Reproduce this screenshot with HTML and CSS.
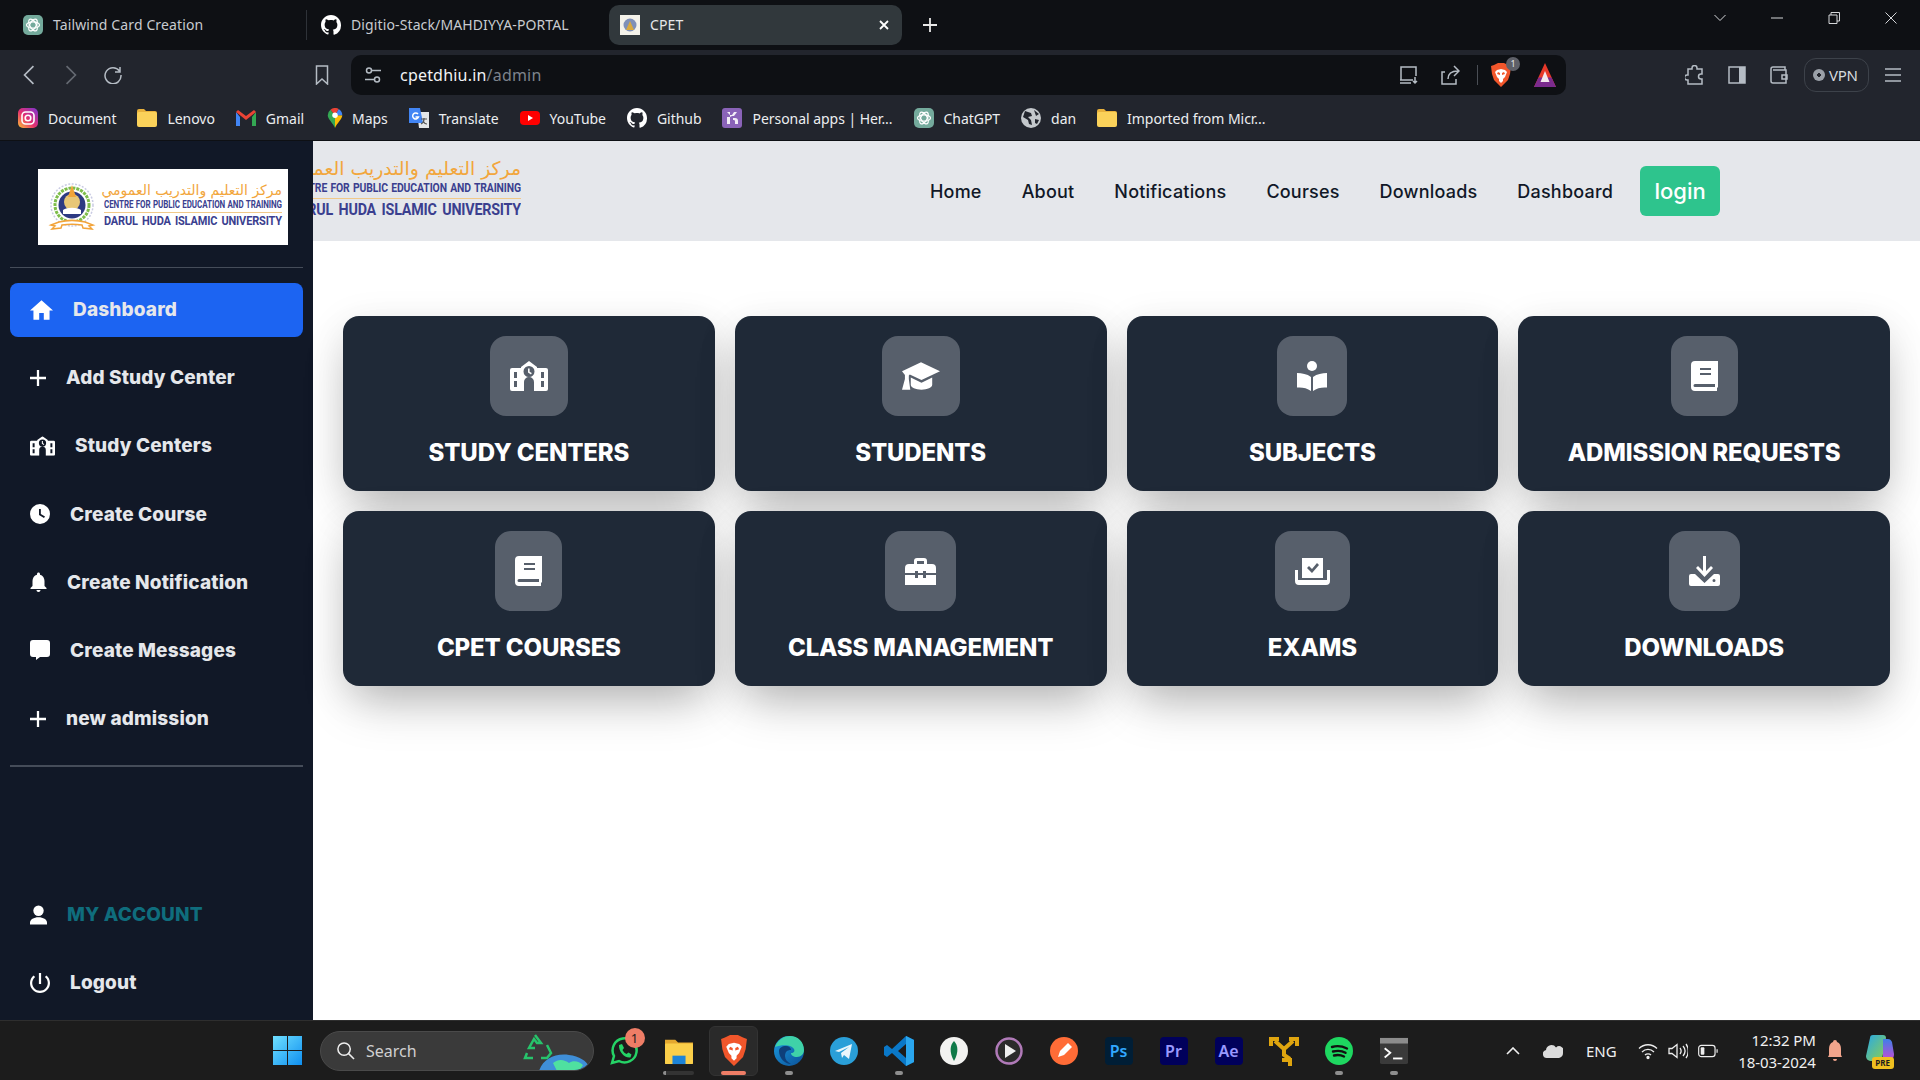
FILE: index.html
```html
<!DOCTYPE html>
<html lang="en">
<head>
<meta charset="utf-8">
<title>CPET</title>
<link rel="stylesheet" href="styles.css">
</head>
<body>
<svg class="defs" aria-hidden="true">
  <defs>
    <linearGradient id="ig" x1="0" y1="1" x2="1" y2="0"><stop offset="0" stop-color="#fdc136"/><stop offset=".45" stop-color="#e6306e"/><stop offset="1" stop-color="#7a35d4"/></linearGradient>
    <linearGradient id="win" x1="0" y1="0" x2="1" y2="1"><stop offset="0" stop-color="#6fe0ff"/><stop offset="1" stop-color="#0f8ff0"/></linearGradient>
    <linearGradient id="edge" x1="0" y1="0" x2="1" y2="1"><stop offset="0" stop-color="#1b9de2"/><stop offset="1" stop-color="#0b4f96"/></linearGradient>
    <linearGradient id="cop" x1="0" y1="0" x2="1" y2="1"><stop offset="0" stop-color="#27a9e8"/><stop offset="1" stop-color="#8fd04a"/></linearGradient>
    <linearGradient id="cop2" x1="0" y1="0" x2="0" y2="1"><stop offset="0" stop-color="#3f7fe8"/><stop offset="1" stop-color="#c84ad0"/></linearGradient>
    <symbol id="i-school" viewBox="0 0 38 30"><path fill-rule="evenodd" d="M19 0l8 6v1h9a2 2 0 0 1 2 2v19a2 2 0 0 1-2 2H24V21a5 5 0 0 0-10 0v9H2a2 2 0 0 1-2-2V9a2 2 0 0 1 2-2h9V6zM19 5a5.500 5.500 0 1 0 0 11 5.500 5.500 0 0 0 0-11zM18 7.500h1.600v3.300l2.200 1.300-.8 1.300-3-1.800zM4 11v6h3v-6zM4 20v6h3v-6zM31 11v6h3v-6zM31 20v6h3v-6z"/></symbol>
    <symbol id="i-cap" viewBox="0 0 39 28"><path d="M19.500 0L39 9 20 18 8 12.500 7 13.500V17l1.500 11H0l3-11v-4L0 9zM9 15.500L20 21l11-5.500V23c0 3-5 5-11 5s-11-2-11-5z"/></symbol>
    <symbol id="i-reader" viewBox="0 0 30 30"><circle cx="15" cy="5" r="5"/><path d="M0 12c5 0 10 1 14 4v14c-4-3-9-4-14-3.500zM30 12c-5 0-10 1-14 4v14c4-3 9-4 14-3.500z"/></symbol>
    <symbol id="i-book" viewBox="0 0 27 30"><path fill-rule="evenodd" d="M4 0h23v26l-1 1v3H4a4 4 0 0 1-4-4V4a4 4 0 0 1 4-4zM9 7v2h11V7zM9 12v2h11v-2zM4 23a1.500 1.500 0 0 0 0 3h20v-3z"/></symbol>
    <symbol id="i-case" viewBox="0 0 31 27"><path fill-rule="evenodd" d="M9 6V3a3 3 0 0 1 3-3h7a3 3 0 0 1 3 3v3h5a4 4 0 0 1 4 4v5H21v-2h-3v2h-5v-2h-3v2H0v-5a4 4 0 0 1 4-4zM12 3v3h7V3zM0 17h10v3h3v-3h5v3h3v-3h10v10H0z"/></symbol>
    <symbol id="i-exam" viewBox="0 0 35 27"><path fill-rule="evenodd" d="M7 0h21v20H7zM12 10l2-2 3 3 5-6 2 2-7 8zM0 12h3v10h29V12h3v11a4 4 0 0 1-4 4H4a4 4 0 0 1-4-4z"/></symbol>
    <symbol id="i-dl" viewBox="0 0 31 30"><path fill-rule="evenodd" d="M14 0h3v15l5-5 2 2-8.500 9L7 12l2-2 5 5zM2 18h4l9.500 9 9.500-9h4a2 2 0 0 1 2 2v8a2 2 0 0 1-2 2H2a2 2 0 0 1-2-2v-8a2 2 0 0 1 2-2zM25 23a1.500 1.500 0 1 0 0 3 1.500 1.500 0 0 0 0-3z"/></symbol>
    <symbol id="i-plus" viewBox="5 5 14 14"><path d="M19 13h-6v6h-2v-6H5v-2h6V5h2v6h6v2z"/></symbol>
    <symbol id="i-github" viewBox="0 0 16 16"><path d="M8 0C3.580 0 0 3.580 0 8c0 3.540 2.290 6.530 5.470 7.590.4.070.55-.17.55-.38v-1.340c-2.230.48-2.700-1.070-2.700-1.070-.36-.92-.89-1.170-.89-1.170-.73-.5.060-.49.060-.49.800.060 1.220.82 1.220.82.710 1.220 1.870.87 2.330.66.070-.52.280-.87.510-1.070-1.780-.2-3.640-.89-3.640-3.950 0-.87.310-1.590.82-2.150-.08-.2-.36-1.020.08-2.120 0 0 .67-.21 2.200.82A7.600 7.600 0 0 1 8 4.040c.68 0 1.360.09 2 .27 1.530-1.040 2.200-.82 2.200-.82.440 1.100.16 1.920.08 2.120.510.56.820 1.270.82 2.150 0 3.070-1.870 3.750-3.650 3.950.290.25.540.73.540 1.480v2.200c0 .21.150.46.550.38A8 8 0 0 0 16 8c0-4.420-3.580-8-8-8z"/></symbol>
    <symbol id="i-gpt" viewBox="0 0 20 20"><rect width="20" height="20" rx="5" fill="#74aa9c"/><g fill="none" stroke="#fff" stroke-width="1.300"><ellipse cx="10" cy="10" rx="6.500" ry="3.200"/><ellipse cx="10" cy="10" rx="6.500" ry="3.200" transform="rotate(60 10 10)"/><ellipse cx="10" cy="10" rx="6.500" ry="3.200" transform="rotate(120 10 10)"/></g></symbol>
    <symbol id="i-folder" viewBox="0 0 20 18"><path fill="#e9b23c" d="M0 2a2 2 0 0 1 2-2h5l2 2h9a2 2 0 0 1 2 2v2H0z"/><rect y="3" width="20" height="15" rx="2" fill="#fbd25a"/></symbol>
    <symbol id="i-brave" viewBox="0 0 20 24"><path fill="#f1562b" d="M3 2l4-2h6l4 2 3 1-1 8-2 6-7 7-7-7-2-6-1-8z"/><path fill="#fff" d="M6 7l4-1 4 1 2 2-2 5-2 2v2l-2 2-2-2v-2l-2-2-2-5z"/><path fill="#f1562b" d="M7 9l2 1v2l-3-1zM13 9l-2 1v2l3-1z"/></symbol>
  </defs>
</svg>

<div class="chrome">
  <div class="tabstrip">
    <div class="tab tab-first"><svg class="fav"><use href="#i-gpt"/></svg><span>Tailwind Card Creation</span></div>
    <div class="tab tab-second"><svg class="fav fav-white"><use href="#i-github"/></svg><span>Digitio-Stack/MAHDIYYA-PORTAL</span></div>
    <div class="tab tab-active">
      <svg class="fav" viewBox="0 0 20 20"><rect width="20" height="20" fill="#f4f2ea"/><circle cx="10" cy="10" r="6.500" fill="#7f90b8"/><path d="M6 15l4-9 4 9z" fill="#d8a93f"/></svg>
      <span>CPET</span>
      <svg class="tab-close" viewBox="0 0 10 10"><path d="M1 1l8 8M9 1l-8 8"/></svg>
    </div>
    <svg class="tab-new" viewBox="0 0 14 14"><path d="M7 0v14M0 7h14"/></svg>
    <div class="winctl">
      <div class="wc"><svg viewBox="0 0 12 7"><path d="M.5.500L6 6 11.500.500"/></svg></div>
      <div class="wc"><svg viewBox="0 0 12 12"><path d="M0 6h12"/></svg></div>
      <div class="wc"><svg viewBox="0 0 12 12"><path d="M1 3h8v8.500H1zM3 3V.500h8.500V9H9"/></svg></div>
      <div class="wc"><svg viewBox="0 0 12 12"><path d="M.5.500l11 11M11.500.500l-11 11"/></svg></div>
    </div>
  </div>

  <div class="toolbar">
    <div class="tb-left">
      <div class="tb-cell"><svg class="ln" viewBox="0 0 10 18"><path d="M9 1L1 9l8 8"/></svg></div>
      <div class="tb-cell tb-dim"><svg class="ln" viewBox="0 0 10 18"><path d="M1 1l8 8-8 8"/></svg></div>
      <div class="tb-cell"><svg class="ln ln-18" viewBox="0 0 18 18"><path d="M15.500 5A8 8 0 1 0 17 9M16 1v5h-5"/></svg></div>
    </div>
    <div class="tb-cell tb-bookmark"><svg class="ln" viewBox="0 0 14 20"><path d="M1.500 1h11v18L7 14l-5.500 5z"/></svg></div>
    <div class="urlbar">
      <svg class="ln ln-tune" viewBox="0 0 18 18"><circle cx="5" cy="4.500" r="2.500"/><path d="M8 4.500h9M1 13.500h9"/><circle cx="13" cy="13.500" r="2.500"/></svg>
      <div class="url"><span class="url-host">cpetdhiu.in</span><span class="url-path">/admin</span></div>
      <div class="url-actions">
        <svg class="ln act-install" viewBox="0 0 20 20"><path d="M13 15H2V2h15v9M1 15h13M1 18h11M16 12v6M14 16l2 2 2-2"/></svg>
        <svg class="ln act-share" viewBox="0 0 20 20"><path d="M5 7H2v12h14v-5M8 14c0-5 3-8 10-8M14 1l5 5-5 5"/></svg>
        <span class="act-sep"></span>
        <span class="brave-wrap"><svg class="brave-ico"><use href="#i-brave"/></svg><span class="brave-badge">1</span></span>
        <svg class="act-tri" viewBox="0 0 22 24"><path fill="#e8392a" d="M11 0l11 24H0z"/><path fill="#7b2b8e" d="M4.500 14.500h13L22 24H0z"/><path fill="#f4e9ee" d="M11 8l4.500 11h-9z"/></svg>
      </div>
    </div>
    <div class="tb-right">
      <div class="tb-cell"><svg class="ln" viewBox="0 0 20 20"><path d="M7 3a2.500 2.500 0 0 1 5 0v1h5v5h-1a2.500 2.500 0 0 0 0 5h1v5H3v-4h-1a2.500 2.500 0 0 1 0-5h1V4h4z"/></svg></div>
      <div class="tb-cell"><svg class="sidepanel" viewBox="0 0 18 18"><path fill="none" stroke="#b5bcc4" stroke-width="1.500" d="M1 1h16v16H1z"/><path fill="#b5bcc4" d="M11 1h6v16h-6z"/></svg></div>
      <div class="tb-cell"><svg class="ln" viewBox="0 0 20 20"><path d="M16 5V2H4a2 2 0 0 0-2 2v12a2 2 0 0 0 2 2h13V5H4M13 10h5v4h-5z"/></svg></div>
      <div class="vpn"><span class="vpn-dot"></span><span>VPN</span></div>
      <div class="tb-cell tb-menu"><svg class="ln" viewBox="0 0 16 14"><path d="M0 1h16M0 7h16M0 13h16"/></svg></div>
    </div>
  </div>

  <div class="bookmarks">
    <div class="bm"><svg viewBox="0 0 20 20"><rect width="20" height="20" rx="5" fill="url(#ig)"/><rect x="4" y="4" width="12" height="12" rx="3.500" fill="none" stroke="#fff" stroke-width="1.600"/><circle cx="10" cy="10" r="2.800" fill="none" stroke="#fff" stroke-width="1.600"/></svg><span>Document</span></div>
    <div class="bm"><svg><use href="#i-folder"/></svg><span>Lenovo</span></div>
    <div class="bm"><svg viewBox="0 0 20 16"><path fill="#4285f4" d="M0 2v14h4V7z"/><path fill="#34a853" d="M16 7v9h4V2z"/><path fill="#ea4335" d="M0 2l10 8 10-8-2-2-8 6-8-6z"/></svg><span>Gmail</span></div>
    <div class="bm bm-maps"><svg viewBox="0 0 16 22"><path fill="#34a853" d="M8 22C6 17 0 12 0 8a8 8 0 0 1 3-6l5 6z"/><path fill="#fbbc04" d="M8 22c2-5 8-10 8-14l-8 0z"/><path fill="#4285f4" d="M16 8a8 8 0 0 0-4-7L8 8z"/><path fill="#ea4335" d="M3 2a8 8 0 0 1 9-1L8 8z"/><circle cx="8" cy="8" r="3" fill="#fff"/></svg><span>Maps</span></div>
    <div class="bm"><svg viewBox="0 0 20 20"><path fill="#e4e6e8" d="M8 4h12v16H10z"/><path fill="#4285f4" d="M0 0h11l3 15H0z"/><path fill="none" stroke="#fff" stroke-width="1.500" d="M9 6a3 3 0 1 0 .5 3H6.500"/><path fill="none" stroke="#555" stroke-width="1.200" d="M12 11h6M15 10v1c0 2-1 4-3 5M14 13c1 2 2 3 4 3"/></svg><span>Translate</span></div>
    <div class="bm"><svg viewBox="0 0 20 20"><rect y="3" width="20" height="14" rx="4" fill="#f00"/><path fill="#fff" d="M8 7l5 3-5 3z"/></svg><span>YouTube</span></div>
    <div class="bm"><svg class="fav-white"><use href="#i-github"/></svg><span>Github</span></div>
    <div class="bm"><svg viewBox="0 0 20 20"><rect width="20" height="20" rx="3" fill="#8a63b8"/><path fill="#f2edf7" d="M5 4h3v5l2-1h2l3-4h-3l-2 3H8zM5 9h3v7H5zM11 10h2c2 0 3 1 3 3v3h-3v-3c0-1-1-1-2-1z"/></svg><span>Personal apps | Her...</span></div>
    <div class="bm"><svg><use href="#i-gpt"/></svg><span>ChatGPT</span></div>
    <div class="bm"><svg viewBox="0 0 20 20"><circle cx="10" cy="10" r="10" fill="#c4c8cc"/><path fill="#22252d" d="M4 3l6 2 1 3-4 1 3 3 1 5-3-1-1-4-5-3zM13 2l5 4-3 2zM14 11l4 1-2 4-2-1z"/></svg><span>dan</span></div>
    <div class="bm"><svg><use href="#i-folder"/></svg><span>Imported from Micr...</span></div>
  </div>
</div>

<div class="app">
  <aside class="sidebar">
    <div class="logo-card">
      <svg class="emblem" viewBox="0 0 52 48">
        <circle cx="26" cy="22" r="21" fill="none" stroke="#c9cbe3" stroke-width="1.500" stroke-dasharray="2 1.500"/>
        <circle cx="26" cy="22" r="17" fill="none" stroke="#7dbd4a" stroke-width="3" stroke-dasharray="3 1"/>
        <circle cx="26" cy="22" r="13.500" fill="#2d3a82"/>
        <circle cx="26" cy="19" r="8" fill="#e8c777"/>
        <path fill="#f2a43a" d="M22 14l4-12 4 12z"/>
        <path fill="#fff" d="M17 27c4-3 14-3 18 0v4H17z"/>
        <path fill="#fff" stroke="#f2a43a" stroke-width="1.500" d="M5 42l8-3c8-2 18-2 26 0l8 3-4 1 3 3-9-1-1-3c-6-1-14-1-20 0l-1 3-9 1 3-3z"/>
      </svg>
      <div class="logo-text">
        <div class="logo-ar" lang="ar" dir="rtl">مركز التعليم والتدريب العمومي</div>
        <div class="logo-en">CENTRE FOR PUBLIC EDUCATION AND TRAINING</div>
        <div class="logo-rule"></div>
        <div class="logo-uni">DARUL HUDA ISLAMIC UNIVERSITY</div>
      </div>
    </div>
    <div class="side-rule side-rule-top"></div>
    <nav class="side-nav">
      <a class="side-item side-active"><svg class="ic ic-home" viewBox="2 3 20 17"><path d="M10 20v-6h4v6h5v-8h3L12 3 2 12h3v8z"/></svg><span>Dashboard</span></a>
      <a class="side-item"><svg class="ic ic-plus"><use href="#i-plus"/></svg><span>Add Study Center</span></a>
      <a class="side-item"><svg class="ic ic-school" viewBox="0 0 38 30"><use href="#i-school"/></svg><span>Study Centers</span></a>
      <a class="side-item"><svg class="ic" viewBox="0 0 24 24"><path fill-rule="evenodd" d="M12 0a12 12 0 1 1 0 24 12 12 0 0 1 0-24zM10.800 6v7.200l6 3.600 1.200-1.900-5-3V6z"/></svg><span>Create Course</span></a>
      <a class="side-item"><svg class="ic ic-bell" viewBox="4 2 16 20"><path d="M12 22c1.100 0 2-.9 2-2h-4c0 1.100.89 2 2 2zm6-6v-5c0-3.070-1.640-5.640-4.500-6.320V4c0-.83-.67-1.500-1.500-1.500s-1.500.67-1.500 1.500v.68C7.630 5.360 6 7.920 6 11v5l-2 2v1h16v-1l-2-2z"/></svg><span>Create Notification</span></a>
      <a class="side-item"><svg class="ic" viewBox="0 0 20 20"><path d="M3 0h14a3 3 0 0 1 3 3v11a3 3 0 0 1-3 3h-7l-4 3v-3H3a3 3 0 0 1-3-3V3a3 3 0 0 1 3-3z"/></svg><span>Create Messages</span></a>
      <a class="side-item"><svg class="ic ic-plus"><use href="#i-plus"/></svg><span>new admission</span></a>
    </nav>
    <div class="side-rule side-rule-bottom"></div>
    <div class="side-foot">
      <a class="side-item side-account"><svg class="ic ic-bell" viewBox="0 0 18 20"><circle cx="9" cy="5.500" r="5.500"/><path d="M0 20v-2c0-3 4-5.500 9-5.500s9 2.500 9 5.500v2z"/></svg><span>MY ACCOUNT</span></a>
      <a class="side-item"><svg class="ic" viewBox="3 3 18 18"><path d="M13 3h-2v10h2V3zm4.830 2.170l-1.420 1.420C17.990 7.860 19 9.810 19 12c0 3.870-3.130 7-7 7s-7-3.130-7-7c0-2.190 1.010-4.140 2.580-5.420L6.170 5.170C4.230 6.820 3 9.260 3 12c0 4.970 4.030 9 9 9s9-4.030 9-9c0-2.740-1.230-5.180-3.170-6.830z"/></svg><span>Logout</span></a>
    </div>
  </aside>

  <main class="main">
    <header class="topbar">
      <div class="brand">
        <div class="logo-text logo-text-lg">
          <div class="logo-ar" lang="ar" dir="rtl">مركز التعليم والتدريب العمومي</div>
          <div class="logo-en">CENTRE FOR PUBLIC EDUCATION AND TRAINING</div>
          <div class="logo-rule"></div>
          <div class="logo-uni">DARUL HUDA ISLAMIC UNIVERSITY</div>
        </div>
      </div>
      <nav class="topnav">
        <a>Home</a><a>About</a><a>Notifications</a><a>Courses</a><a>Downloads</a><a>Dashboard</a>
      </nav>
      <a class="login">login</a>
    </header>

    <section class="cards">
      <article class="card"><div class="card-icon"><svg><use href="#i-school"/></svg></div><h2>STUDY CENTERS</h2></article>
      <article class="card"><div class="card-icon"><svg><use href="#i-cap"/></svg></div><h2>STUDENTS</h2></article>
      <article class="card"><div class="card-icon"><svg><use href="#i-reader"/></svg></div><h2>SUBJECTS</h2></article>
      <article class="card"><div class="card-icon"><svg><use href="#i-book"/></svg></div><h2>ADMISSION REQUESTS</h2></article>
      <article class="card"><div class="card-icon"><svg><use href="#i-book"/></svg></div><h2>CPET COURSES</h2></article>
      <article class="card"><div class="card-icon"><svg class="short"><use href="#i-case"/></svg></div><h2>CLASS MANAGEMENT</h2></article>
      <article class="card"><div class="card-icon"><svg class="short"><use href="#i-exam"/></svg></div><h2>EXAMS</h2></article>
      <article class="card"><div class="card-icon"><svg><use href="#i-dl"/></svg></div><h2>DOWNLOADS</h2></article>
    </section>
  </main>
</div>

<footer class="taskbar">
  <div class="tk"><svg class="tk-win" viewBox="0 0 29 29"><path fill="url(#win)" d="M0 0h14v14H0zM15 0h14v14H15zM0 15h14v14H0zM15 15h14v14H15z"/></svg></div>
  <div class="search">
    <svg class="search-ico" viewBox="0 0 20 20"><circle cx="8.500" cy="8.500" r="6.500"/><path d="M13 13l6 6"/></svg>
    <span>Search</span>
    <svg class="search-art" viewBox="0 0 66 40"><path fill="none" stroke="#27c46b" stroke-width="2.500" d="M12 4l6 8h-4l-3-4-5 9h6M24 14l4 8-4 5h-6M4 22l-2 5h8"/><path fill="#3f8fd8" d="M16 40C20 28 32 22 46 24c10 1 18 6 20 12-4 3-10 4-16 4z"/><path fill="#4fe0a0" d="M30 32c6-5 12-3 16 0 4-3 10-2 14 2l-4 6H34z"/></svg>
  </div>
  <div class="tk-group">
    <div class="tk"><span class="tk-stack">
      <svg class="tk-28" viewBox="0 0 28 28"><path fill="none" stroke="#25d366" stroke-width="2.500" d="M2 26l2-7A12 12 0 1 1 9 24z"/><path fill="#25d366" d="M9 8l3-1 2 4-1.500 2c1 2 2 3 4 4l2-1.500 3 2-1 3c-6 1-12-6-11.500-12.500z"/></svg>
      <span class="tk-badge">1</span></span></div>
    <div class="tk tk-open"><svg class="tk-28" viewBox="0 0 30 30"><path fill="#e4a82f" d="M0 3h11l3 3h16v5H0z"/><rect y="7" width="30" height="22" rx="1" fill="#fbcf4a"/><rect x="8" y="20" width="14" height="9" fill="#1d84d8"/></svg></div>
    <div class="tk tk-active"><svg class="tk-brave"><use href="#i-brave"/></svg></div>
    <div class="tk tk-run"><svg class="tk-30" viewBox="0 0 30 30"><circle cx="15" cy="15" r="15" fill="url(#edge)"/><path fill="#3fd2a8" d="M1 11C4 3 11 0 16 0c8 0 14 6 14 14 0 4-3 7-7 7-4 0-6-2-6-4 3 0 4-2 3-4-2-4-11-5-19-2z"/><path fill="#0e3f7a" d="M5 15c0-3 3-5 7-5 3 0 5 2 5 4-4 0-6 2-6 6 0 3 2 6 6 8-6 0-12-6-12-13z"/></svg></div>
    <div class="tk"><svg class="tk-28" viewBox="0 0 28 28"><circle cx="14" cy="14" r="14" fill="#2a9fd8"/><path fill="#eaf6fc" d="M5 14L22 7l-3 15-5-4-2 3-1-5 8-6-10 5z"/></svg></div>
    <div class="tk tk-run"><svg class="tk-30" viewBox="0 0 30 30"><path fill="#0a78c8" d="M22 0l8 4v22l-8 4-14-13-5 4-3-2v-8l3-2 5 4zM22 8l-8 7 8 7z"/><path fill="#2aa6ee" d="M22 0l8 4v22l-8 4z"/></svg></div>
    <div class="tk"><svg class="tk-28" viewBox="0 0 28 28"><circle cx="14" cy="14" r="14" fill="#f2f2f0"/><path fill="#0f7a48" d="M14 4c4 4 5 11 0 20-5-9-4-16 0-20z"/></svg></div>
    <div class="tk"><svg class="tk-28" viewBox="0 0 28 28"><circle cx="14" cy="14" r="12.500" fill="#2b2b2b" stroke="#b07ab8" stroke-width="2.500"/><path fill="#f0f0f0" d="M10 7l11 7-11 7z"/></svg></div>
    <div class="tk"><svg class="tk-28" viewBox="0 0 28 28"><circle cx="14" cy="14" r="14" fill="#ff6c37"/><path fill="#fff" d="M8 20l2-6 8-8 4 4-8 8z"/></svg></div>
    <div class="tk"><span class="adobe adobe-ps">Ps</span></div>
    <div class="tk"><span class="adobe adobe-pr">Pr</span></div>
    <div class="tk"><span class="adobe adobe-ae">Ae</span></div>
    <div class="tk"><svg class="tk-30" viewBox="0 0 30 30"><path fill="none" stroke="#dfa50f" stroke-width="4" d="M2 10V3h8M28 10V3h-8M6 5l9 8 9-8M15 13v6l6 4M13 24h8v6"/></svg></div>
    <div class="tk tk-run"><svg class="tk-28" viewBox="0 0 28 28"><circle cx="14" cy="14" r="14" fill="#1ed760"/><path fill="none" stroke="#111" stroke-width="2.400" stroke-linecap="round" d="M7 10c5-1.500 10-1 15 1.500M8 14.500c4-1 9-.8 12.500 1.300M9 18.500c3.500-.8 7-.5 10 1"/></svg></div>
    <div class="tk tk-run"><svg class="tk-28" viewBox="0 0 30 28"><rect width="30" height="28" rx="2" fill="#3a3a3a"/><rect width="30" height="6" fill="#8c8c8c"/><path fill="none" stroke="#fff" stroke-width="2" d="M5 11l6 5-6 5"/><path stroke="#fff" stroke-width="2" d="M14 22h10"/></svg></div>
  </div>
  <div class="tray">
    <svg class="tr-chev" viewBox="0 0 14 8"><path d="M1 7l6-6 6 6"/></svg>
    <svg class="tr-cloud" viewBox="0 0 20 14"><path fill="#dcdcdc" d="M4 14a4 4 0 0 1-1-7.900A5.500 5.500 0 0 1 13 3.500 4.500 4.500 0 0 1 20 9a5 5 0 0 1-4 5z"/></svg>
    <span class="tr-lang">ENG</span>
    <svg class="tr-wifi" viewBox="0 0 20 16"><path d="M1 5.500c5-5 13-5 18 0M4 9c3.500-3.500 8.500-3.500 12 0M7 12c1.500-1.500 4.500-1.500 6 0"/><circle cx="10" cy="14.500" r="1" fill="#eee"/></svg>
    <svg class="tr-vol" viewBox="0 0 20 16"><path d="M1 5.500h3L9 1.500v13l-5-4H1zM12 5c1.500 2 1.500 4 0 6M15 3c2.500 3 2.500 7 0 10M18 1c3 4 3 10 0 14"/></svg>
    <svg class="tr-bat" viewBox="0 0 22 14"><rect x=".75" y=".75" width="18" height="12.500" rx="3"/><path d="M21 5v4"/><rect x="3" y="3" width="4" height="8" rx="1" fill="#eee" stroke="none"/></svg>
    <div class="clock"><span>12:32 PM</span><span>18-03-2024</span></div>
    <svg class="tr-bell" viewBox="0 0 14 22"><path fill="#f2a58c" d="M7 0a2 2 0 0 1 2 2c3 1 4 4 4 7v6l1 2H0l1-2V9c0-3 1-6 4-7a2 2 0 0 1 2-2zM5 19h4a2 2 0 0 1-4 0z"/></svg>
    <span class="copilot"><svg class="cop-ico" viewBox="0 0 28 26"><path fill="url(#cop)" d="M7 0h10c2 0 3 1 3 3l-4 21c-1 2-2 2-4 2H6c-4 0-6-2-6-5l4-18c0-2 1-3 3-3z"/><path fill="url(#cop2)" d="M17 4h5c2 0 3 1 4 3l2 12c0 4-2 7-6 7H13c2 0 3-1 4-3z"/></svg><span class="cop-pre">PRE</span></span>
  </div>
</footer>
</body>
</html>
```

FILE: styles.css
```css
* { box-sizing: border-box; }
html, body { margin: 0; padding: 0; }
body {
  width: 1920px;
  height: 1080px;
  overflow: hidden;
  display: flex;
  flex-direction: column;
  background: #fff;
  font-family: "Noto Sans", "Open Sans", sans-serif;
}
.defs { display: block; width: 0; height: 0; }
a { text-decoration: none; color: inherit; }

/* Browser chrome */
.chrome { flex: none; height: 141px; background: #22252d; border-bottom: 1px solid #0e1014; color: #fff; }
.tabstrip { display: flex; height: 50px; background: #0e1014; font-size: 14px; letter-spacing: .12px; }
.tab { display: flex; align-items: center; gap: 10px; padding-bottom: 1px; color: #c8cbd0; white-space: nowrap; }
.fav { width: 20px; height: 20px; flex: none; }
.fav-white { fill: #fff; }
.tab-first { width: 307px; padding-left: 23px; border-right: 1px solid #2e3238; margin: 10px 0; }
.tab-second { width: 302px; padding-left: 14px; }
.tab-active { width: 293px; margin-top: 5px; height: 40px; padding: 0 12px 1px 11px; background: #31383c; border-radius: 10px; color: #e6e8ea; }
.tab-close { width: 10px; height: 10px; margin-left: auto; margin-right: 1px; fill: none; stroke: #fff; stroke-width: 1.8; }
.tab-new { width: 14px; height: 14px; margin: 18px 0 0 21px; fill: none; stroke: #e8e8e8; stroke-width: 1.8; }
.winctl { display: flex; margin-left: auto; padding-right: 1px; }
.wc { width: 57px; height: 36px; display: flex; align-items: center; justify-content: center; }
.wc svg { width: 12px; height: 12px; fill: none; stroke: #d4d6d9; stroke-width: 1; }

.toolbar { display: flex; align-items: center; height: 50px; padding-left: 8px; }
.tb-left { display: flex; }
.tb-cell { width: 42px; height: 40px; display: flex; align-items: center; justify-content: center; flex: none; }
.tb-dim { opacity: .45; }
.tb-bookmark { margin-left: 167px; }
.ln { width: 20px; height: 20px; fill: none; stroke: #b5bcc4; stroke-width: 1.5; flex: none; }
.ln-18 { width: 18px; height: 18px; }
.urlbar { display: flex; align-items: center; width: 1215px; height: 40px; margin-left: 8px; padding: 0 10px 0 12px; background: #0e1014; border-radius: 10px; }
.ln-tune { width: 18px; height: 18px; margin: 0 1px; }
.url { margin-left: 17px; font-size: 16px; letter-spacing: .2px; }
.url-host { color: #f2f3f5; }
.url-path { color: #7d838c; }
.url-actions { display: flex; align-items: center; margin-left: auto; }
.act-share { margin-left: 21px; }
.act-sep { width: 1px; height: 20px; margin-left: 17px; background: #4a4e55; }
.brave-wrap { position: relative; display: flex; margin-left: 13px; }
.brave-ico { width: 20px; height: 24px; }
.brave-badge { position: absolute; top: -6px; right: -9px; width: 14px; height: 14px; border-radius: 50%; background: #5e6068; color: #e8e8e8; font-size: 9px; line-height: 14px; text-align: center; }
.act-tri { width: 22px; height: 24px; margin-left: 23px; }
.tb-right { display: flex; align-items: center; margin-left: 108px; }
.sidepanel { width: 18px; height: 20px; }
.vpn { display: flex; align-items: center; gap: 4px; width: 65px; height: 34px; margin-left: 4px; padding-left: 8px; border: 1px solid #3d424a; border-radius: 12px; font-size: 15px; color: #d6dade; letter-spacing: -.3px; }
.vpn-dot { width: 12px; height: 12px; border-radius: 50%; background: radial-gradient(circle, #22252d 0 2px, #9aa0a8 2px); }
.tb-menu { margin-left: 3px; }
.tb-menu .ln { width: 16px; height: 14px; }

.bookmarks { display: flex; align-items: center; gap: 21px; height: 40px; padding: 0 0 4px 18px; font-size: 14px; letter-spacing: -.04px; color: #eceef0; white-space: nowrap; }
.bm { display: flex; align-items: center; gap: 10px; }
.bm svg { width: 20px; height: 20px; flex: none; }
.bm-maps { gap: 7px; }

/* App */
.app { flex: 1; display: flex; min-height: 0; }
.sidebar { width: 313px; flex: none; display: flex; flex-direction: column; background: #111827; color: #e5e7eb; padding: 28px 10px 10px; }
.logo-card { display: flex; align-items: center; width: 250px; height: 76px; margin-left: 28px; padding-left: 8px; background: #fff; }
.emblem { width: 52px; height: 48px; flex: none; margin-right: 6px; }
.logo-text { width: 178px; flex: none; font-size: 10px; padding-bottom: .6em; }
.logo-ar { font-family: "DejaVu Sans", "Noto Sans", sans-serif; font-size: 1.4em; line-height: 1.3em; color: #f2a63c; text-align: start; white-space: nowrap; }
.logo-en { width: 125%; transform: scaleX(.8); transform-origin: left center; font-family: Roboto, "Liberation Sans", sans-serif; font-weight: 700; font-size: 1em; line-height: 1.1em; color: #3b3f8f; white-space: nowrap; letter-spacing: -.01em; text-align: justify; text-align-last: justify; }
.logo-rule { height: 1px; margin: .2em 0; background: #f1c98a; }
.logo-uni { width: 113.6%; transform: scaleX(.88); transform-origin: left center; font-family: Roboto, "Liberation Sans", sans-serif; font-weight: 700; font-size: 1.25em; line-height: .96em; color: #3b3f8f; white-space: nowrap; letter-spacing: -.015em; text-align: justify; text-align-last: justify; }
.logo-text-lg { width: 232px; font-size: 13px; }
.logo-text-lg .logo-ar { font-size: 1.45em; }

.side-rule { height: 1px; background: #454c59; }
.side-rule-top { margin-top: 22px; }
.side-rule-bottom { margin-top: 19px; height: 2px; }
.side-nav { display: flex; flex-direction: column; gap: 14.2px; margin-top: 15px; }
.side-item { display: flex; align-items: center; gap: 20px; height: 54px; padding: 0 0 1px 20px; border-radius: 8px; font-family: Inter, "Noto Sans", sans-serif; font-weight: 800; font-size: 19px; letter-spacing: .15px; }
.side-active { background: #1c64f2; }
.ic { height: 20px; width: 20px; fill: #fff; flex: none; }
.ic-home { width: 23px; }
.ic-plus { width: 16px; height: 16px; }
.ic-school { width: 25px; }
.ic-bell { width: 17px; }
.side-foot { margin-top: auto; display: flex; flex-direction: column; gap: 14px; }
.side-account { color: #0f6d7d; }

.main { flex: 1; min-width: 0; display: flex; flex-direction: column; }
.topbar { flex: none; display: flex; align-items: center; height: 100px; background: #e5e7eb; }
.brand { display: flex; justify-content: flex-end; width: 208px; overflow: hidden; flex: none; }
.topnav { display: flex; gap: 40px; margin-left: 409px; font-family: Inter, "Noto Sans", sans-serif; font-weight: 500; font-size: 18px; letter-spacing: .2px; color: #111827; }
.login { display: flex; align-items: center; justify-content: center; width: 80px; height: 50px; margin-left: 27px; border-radius: 6px; background: #2ec48d; color: #fff; font-family: Inter, "Noto Sans", sans-serif; font-weight: 500; font-size: 22px; }

.cards { display: grid; grid-template-columns: repeat(4, 1fr); gap: 20px; padding: 75px 30px 0; }
.card { height: 175px; padding: 20px 10px 0; display: flex; flex-direction: column; align-items: center; background: #1f2937; border-radius: 16px; box-shadow: 0 25px 50px -12px rgba(0,0,0,.25), 0 10px 40px rgba(0,0,0,.1); }
.card-icon { flex: none; display: flex; align-items: center; height: 80px; padding: 0 20px; background: #575f6b; border-radius: 16px; }
.card-icon svg { height: 30px; width: auto; aspect-ratio: 38 / 30; fill: #fff; display: block; }
.card:nth-child(3) .card-icon svg { aspect-ratio: 30 / 30; }
.card:nth-child(4) .card-icon svg, .card:nth-child(5) .card-icon svg { aspect-ratio: 27 / 30; }
.card:nth-child(6) .card-icon svg { aspect-ratio: 31 / 27; height: 27px; }
.card:nth-child(7) .card-icon svg { aspect-ratio: 35 / 27; height: 27px; }
.card:nth-child(8) .card-icon svg { aspect-ratio: 31 / 30; }
.card h2 { margin: 19px 0 0; font-family: Inter, "Noto Sans", sans-serif; font-weight: 800; font-size: 24px; line-height: 36px; color: #fff; letter-spacing: -.15px; white-space: nowrap; }

/* Taskbar */
.taskbar { flex: none; display: flex; align-items: center; height: 60px; padding-left: 260px; background: #1c1c1c; border-top: 1px solid #2e2e2e; color: #f0f0f0; }
.tk { position: relative; width: 55px; height: 50px; display: flex; align-items: center; justify-content: center; flex: none; }
.tk-win { width: 29px; height: 29px; }
.search { display: flex; align-items: center; width: 274px; height: 40px; margin-left: 5px; padding-left: 15px; background: #3a3a3a; border: 1px solid #4a4a4a; border-radius: 20px; font-size: 16px; color: #d0d0d0; overflow: hidden; }
.search-ico { width: 19px; height: 19px; fill: none; stroke: #eee; stroke-width: 1.6; margin-right: 11px; }
.search-art { width: 66px; height: 40px; margin-left: auto; margin-right: 4px; }
.tk-group { display: flex; margin-left: 2px; }
.tk-stack { position: relative; display: flex; }
.tk-28 { width: 28px; height: 28px; display: block; }
.tk-30 { width: 30px; height: 30px; display: block; }
.tk-badge { position: absolute; top: -9px; right: -7px; width: 20px; height: 20px; border-radius: 50%; background: #ee7d66; color: #1c1c1c; font-size: 13px; line-height: 20px; text-align: center; }
.tk-active::before { content: ""; position: absolute; inset: 0 3px; background: #2a2a2a; border: 1px solid #333; border-radius: 6px; }
.tk-active::after { content: ""; position: absolute; left: 15px; right: 15px; bottom: 1px; height: 4px; border-radius: 2px; background: #ee7d66; }
.tk-brave { position: relative; width: 26px; height: 31px; }
.tk-run::after { content: ""; position: absolute; left: 24px; bottom: 1px; width: 8px; height: 4px; border-radius: 2px; background: #8e8e8e; }
.tk-open::after { content: ""; position: absolute; left: 12px; right: 12px; bottom: 1px; height: 4px; border-radius: 2px; background: linear-gradient(90deg, #8e8e8e 0 3px, #333 3px); }
.adobe { display: flex; align-items: center; justify-content: center; width: 28px; height: 28px; border-radius: 4px; font-family: "Noto Sans", sans-serif; font-weight: 600; font-size: 16px; }
.adobe-ps { background: #001e36; color: #31a8ff; }
.adobe-pr { background: #00005b; color: #9999ff; }
.adobe-ae { background: #00005b; color: #9999ff; }
.tray { display: flex; align-items: center; height: 100%; flex: 1; position: relative; }
.tr-chev { width: 14px; height: 8px; margin-left: 85px; fill: none; stroke: #f0f0f0; stroke-width: 1.6; flex: none; }
.tr-cloud { width: 20px; height: 14px; margin-left: 23px; flex: none; }
.tr-lang { margin-left: 23px; font-size: 15px; }
.tr-wifi, .tr-vol, .tr-bat { fill: none; stroke: #eee; stroke-width: 1.3; flex: none; }
.tr-wifi { width: 20px; height: 18px; margin-left: 21px; }
.tr-vol { width: 20px; height: 16px; margin-left: 10px; }
.tr-bat { width: 20px; height: 14px; margin-left: 10px; }
.clock { display: flex; flex-direction: column; align-items: flex-end; width: 98px; font-size: 15px; line-height: 22px; letter-spacing: -.1px; }
.tr-bell { width: 14px; height: 22px; margin-left: 12px; flex: none; }
.copilot { position: relative; display: block; width: 28px; height: 32px; margin-left: 24px; }
.cop-ico { width: 28px; height: 26px; display: block; }
.cop-pre { position: absolute; left: 6px; bottom: -2px; width: 22px; height: 12px; border-radius: 3px; background: #f0c020; color: #1c1c1c; font-size: 8px; font-weight: 700; line-height: 12px; text-align: center; }
```
